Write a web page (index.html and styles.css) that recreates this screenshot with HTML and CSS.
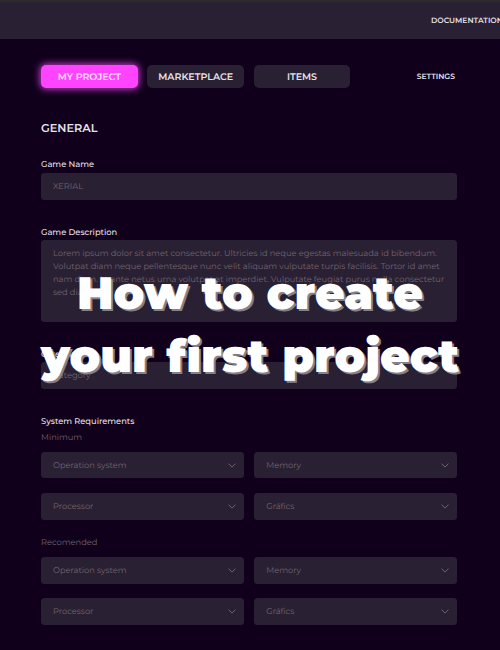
FILE: index.html
```html
<!DOCTYPE html>
<html lang="en">
<head>
<meta charset="utf-8">
<title>How to create your first project</title>
<link rel="stylesheet" href="styles.css">
</head>
<body>
<header class="topbar"><a class="doc">DOCUMENTATION</a></header>
<main class="page">
  <nav class="tabs">
    <a class="tab active">MY PROJECT</a>
    <a class="tab">MARKETPLACE</a>
    <a class="tab">ITEMS</a>
    <a class="settings">SETTINGS</a>
  </nav>
  <h2 class="section">GENERAL</h2>
  <label class="label l-name">Game Name</label>
  <div class="field name">XERIAL</div>
  <label class="label l-desc">Game Description</label>
  <div class="field area">
    <span>Lorem ipsum dolor sit amet consectetur. Ultricies id neque egestas malesuada id bibendum.</span>
    <span>Volutpat diam neque pellentesque nunc velit aliquam vulputate turpis facilisis. Tortor id amet</span>
    <span>nam diam. In ante netus urna volutpat at imperdiet. Vulputate feugiat purus nulla consectetur</span>
    <span>sed diam.</span>
  </div>
  <label class="label l-cat">Category</label>
  <div class="field cat">Category</div>
  <h3 class="label l-req">System Requirements</h3>
  <p class="sub s-min">Minimum</p>
  <div class="selects">
    <div class="field"><span>Operation system</span><svg class="chev" viewBox="0 0 8 5"><path d="M.5.6 4 4.1 7.5.6"/></svg></div>
    <div class="field"><span>Memory</span><svg class="chev" viewBox="0 0 8 5"><path d="M.5.6 4 4.1 7.5.6"/></svg></div>
    <div class="field"><span>Processor</span><svg class="chev" viewBox="0 0 8 5"><path d="M.5.6 4 4.1 7.5.6"/></svg></div>
    <div class="field"><span>Gráfics</span><svg class="chev" viewBox="0 0 8 5"><path d="M.5.6 4 4.1 7.5.6"/></svg></div>
  </div>
  <p class="sub s-rec">Recomended</p>
  <div class="selects">
    <div class="field"><span>Operation system</span><svg class="chev" viewBox="0 0 8 5"><path d="M.5.6 4 4.1 7.5.6"/></svg></div>
    <div class="field"><span>Memory</span><svg class="chev" viewBox="0 0 8 5"><path d="M.5.6 4 4.1 7.5.6"/></svg></div>
    <div class="field"><span>Processor</span><svg class="chev" viewBox="0 0 8 5"><path d="M.5.6 4 4.1 7.5.6"/></svg></div>
    <div class="field"><span>Gráfics</span><svg class="chev" viewBox="0 0 8 5"><path d="M.5.6 4 4.1 7.5.6"/></svg></div>
  </div>
</main>
<h1 class="title"><span>How to create</span><span>your first project</span></h1>
</body>
</html>
```
FILE: styles.css
```css
* { box-sizing: border-box; }
body {
  margin: 0;
  width: 500px;
  height: 650px;
  position: relative;
  overflow: hidden;
  background: #10001c;
  color: #e6e2e8;
  font-family: Montserrat, Inter, sans-serif;
  font-size: 8.3px;
  text-rendering: geometricPrecision;
}
.topbar {
  height: 39px;
  border-top: 2px solid #2b2b2b;
  background: #2a2033;
  padding-left: 431px;
  line-height: 37px;
  white-space: nowrap;
}
.doc, .settings { font-size: 7.6px; font-weight: 600; }
.page { width: 416px; margin-left: 41px; padding-top: 26px; }
.tabs { display: flex; height: 23px; gap: 9.5px; align-items: center; }
.tab {
  width: 96.8px;
  height: 23px;
  padding-top: 1px;
  border-radius: 5px;
  background: #2a2033;
  display: flex;
  align-items: center;
  justify-content: center;
  font-size: 9.5px;
  font-weight: 600;
  white-space: nowrap;
}
.active { background: #ff44ff; color: #ffe2ff; box-shadow: 0 0 7px 1px #d23bd8; }
.settings { margin-left: auto; margin-right: 2px; }
.section { margin: 33px 0 0; font-size: 11.3px; line-height: 15px; font-weight: 600; }
.label { display: block; margin: 0; font-size: 8.3px; line-height: 12px; font-weight: 500; }
.l-name { margin-top: 23px; }
.field {
  height: 27px;
  border-radius: 3.5px;
  background: #2a2033;
  color: #71656f;
  padding: 1px 8px 0 12px;
  display: flex;
  align-items: center;
  justify-content: space-between;
  white-space: nowrap;
}
.name { margin-top: 2px; height: 26.5px; }
.l-desc { margin-top: 27px; }
.area {
  height: 82px;
  margin-top: 1.5px;
  padding-top: 8px;
  flex-direction: column;
  align-items: flex-start;
  justify-content: flex-start;
  line-height: 13px;
}
.l-cat { margin-top: 27px; }
.cat { margin-top: 1px; }
.l-req { margin-top: 27px; }
.sub { margin: 4px 0 0; line-height: 13px; color: #71656f; }
.selects {
  margin-top: 6.7px;
  display: grid;
  grid-template-columns: 1fr 1fr;
  column-gap: 10.5px;
  row-gap: 14.5px;
}
.selects .field { height: 26.8px; }
.s-rec { margin-top: 17.5px; }
.chev { width: 8px; height: 5px; margin-top: -1px; fill: none; stroke: #776b77; stroke-width: .9; }
.title {
  position: absolute;
  left: 0;
  top: 263px;
  width: 500px;
  margin: 0;
  color: #fff;
  font-size: 45.5px;
  line-height: 62.5px;
  font-weight: 900;
  text-align: center;
  text-shadow: 2px 2px 0 #85808a;
  white-space: nowrap;
}
.title span { display: block; }
```
